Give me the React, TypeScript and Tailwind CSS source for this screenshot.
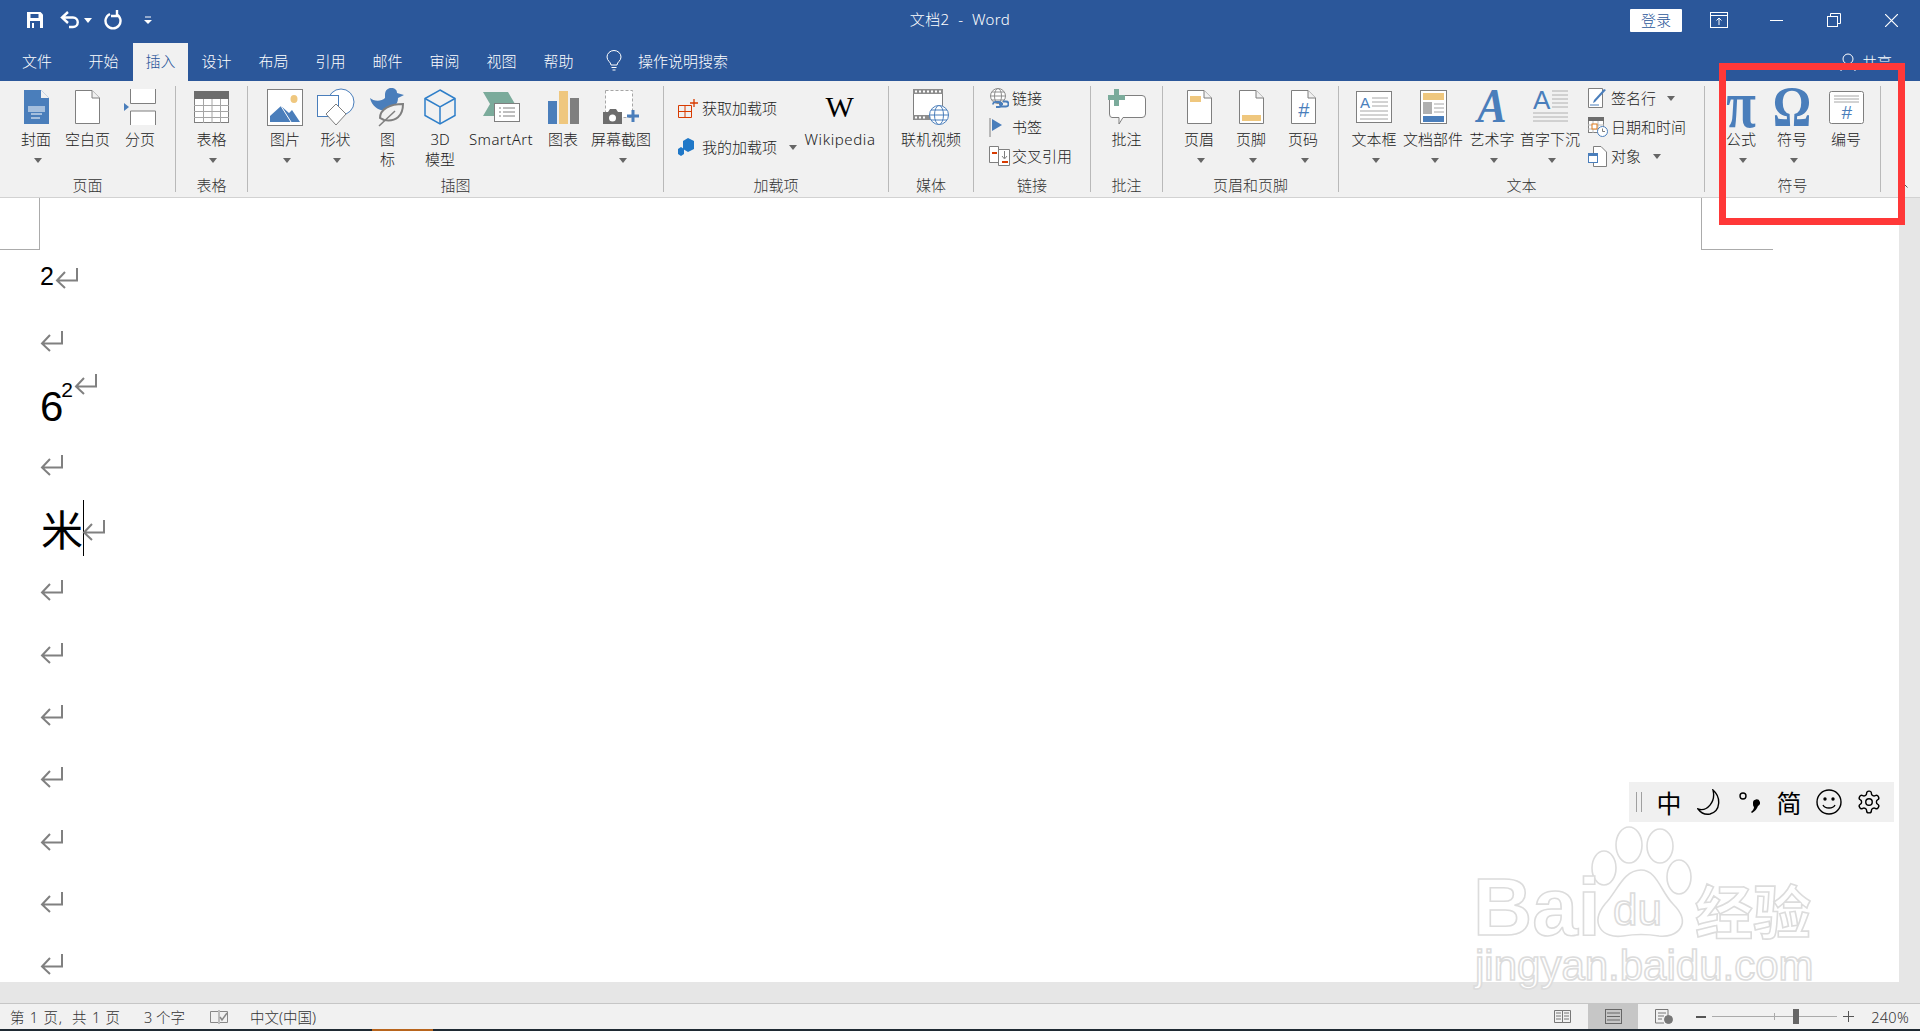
import { ReactNode } from "react";

const BLUE = "#4a7ebb";
const GOLD = "#efc77e";
const GRAY = "#7f7f7f";
const GREEN = "#7bab9b";
const RED = "#d83b01";

const Caret = ({ color = "#666" }: { color?: string }) => (
  <svg width="8" height="5" viewBox="0 0 8 5" className="shrink-0">
    <path d="M0 0H8L4 5Z" fill={color} />
  </svg>
);

const Return = ({ className = "" }: { className?: string }) => (
  <svg width="23" height="21" viewBox="0 0 23 21" className={`shrink-0 ${className}`}>
    <path d="M22 0V12.5H2M10 4L2 12.5L10 20" fill="none" stroke="#808080" strokeWidth="2" />
  </svg>
);

const Doc = ({ children }: { children?: ReactNode }) => (
  <svg width="25" height="34" viewBox="0 0 25 34">
    <path d="M.5.5H17L24.5 8V33.5H.5Z" fill="#fff" stroke={GRAY} />
    <path d="M17 .5V8H24.5" fill="#f1f1f1" stroke={GRAY} />
    {children}
  </svg>
);

const CoverIcon = () => (
  <svg width="25" height="34" viewBox="0 0 25 34">
    <path d="M0 0H17L25 8V34H0Z" fill={BLUE} />
    <path d="M17 0L25 8H17Z" fill="#f1f1f1" />
    <path d="M4 17H21M4 19H21M4 21H21M7 24H18M7 28H16" stroke="#fff" />
  </svg>
);

const BreakIcon = () => (
  <svg width="32" height="36" viewBox="0 0 32 36">
    <path d="M6.5 0V14.5H31.5V0M6.5 36V22H31.5V36" fill="#fff" stroke={GRAY} />
    <path d="M0 14L5 18L0 22Z" fill={BLUE} />
  </svg>
);

const TableIcon = () => (
  <svg width="35" height="32" viewBox="0 0 35 32">
    <rect x=".5" y=".5" width="34" height="31" fill="#fff" stroke={GRAY} />
    <rect width="35" height="8" fill="#6d6d6d" />
    <path d="M0 14.5H35M0 20.5H35M0 26.5H35M9.5 8V32M18 8V32M26.5 8V32" stroke="#a6a6a6" />
  </svg>
);

const PictureIcon = () => (
  <svg width="36" height="37" viewBox="0 0 36 37">
    <rect x=".5" y=".5" width="35" height="36" fill="#fff" stroke={GRAY} />
    <ellipse cx="27" cy="10" rx="3.5" ry="4" fill={GOLD} />
    <path d="M3 33V27L14 17L22 24L25 21L33 33Z" fill={BLUE} />
    <path d="M14 17L24 33" stroke="#fff" />
  </svg>
);

const ShapesIcon = () => (
  <svg width="38" height="38" viewBox="0 0 38 38">
    <circle cx="24" cy="14" r="13" fill="#fff" stroke={BLUE} />
    <rect x=".5" y="7.5" width="21" height="21" fill="#fff" stroke={BLUE} />
    <path d="M19 16L29 26L19 37L9 26Z" fill="#fff" stroke={GRAY} />
  </svg>
);

const IconsIcon = () => (
  <svg width="36" height="40" viewBox="0 0 36 40">
    <path d="M15 8C15 3 18 1 21 1C25 1 27 3 27 6L34 8L28 11C28 17 24 21 17 23C10 25 2 20 0 11C3 14 11 15 15 11Z" fill={BLUE} />
    <path d="M10 31C10 22 20 17 33 17C33 29 26 35 14 33Z" fill="#f1f1f1" stroke={GRAY} strokeWidth="2" />
    <path d="M9 39L25 24" stroke={GRAY} strokeWidth="1.5" />
  </svg>
);

const CubeIcon = () => (
  <svg width="32" height="36" viewBox="0 0 32 36" fill="none" stroke="#2f7fc9" strokeWidth="1.5">
    <path d="M16 1L31 9.5V26.5L16 35L1 26.5V9.5Z" />
    <path d="M1 9.5L16 18L31 9.5M16 18V35" />
  </svg>
);

const SmartArtIcon = () => (
  <svg width="37" height="30" viewBox="0 0 37 30">
    <path d="M0 0H25L32 12L25 24H0L7 12Z" fill={GREEN} />
    <rect x="11.5" y="11.5" width="25" height="18" fill="#fff" stroke={GRAY} />
    <path d="M16 16H18M16 20H18M16 24H18M20 16H32M20 20H32M20 24H32" stroke={GRAY} />
  </svg>
);

const ChartIcon = () => (
  <svg width="31" height="33" viewBox="0 0 31 33">
    <rect y="10" width="9" height="23" fill={BLUE} />
    <rect x="11" width="9" height="33" fill={GOLD} />
    <rect x="22" y="7" width="9" height="26" fill={GRAY} />
  </svg>
);

const ScreenshotIcon = () => (
  <svg width="36" height="34" viewBox="0 0 36 34">
    <rect x="2.5" y=".5" width="27" height="27" fill="#fff" stroke="#a6a6a6" strokeDasharray="3 2" />
    <path d="M0 22H5L7 19H13L15 22H19V34H0Z" fill="#6d6d6d" />
    <circle cx="9.5" cy="28" r="3.5" fill="#fff" />
    <path d="M30 20V32M24 26H36" stroke={BLUE} strokeWidth="3" />
  </svg>
);

const GetAddinsIcon = () => (
  <svg width="20" height="19" viewBox="0 0 20 19" fill="none" stroke={RED}>
    <path d="M.5 6.5H13.5V18.5H.5ZM7 6.5V18.5M.5 12.5H13.5" />
    <path d="M16 0V8M12 4H20" strokeWidth="1.3" />
  </svg>
);

const MyAddinsIcon = () => (
  <svg width="17" height="18" viewBox="0 0 17 18" fill="#1f78c8">
    <path d="M10 0L16 3V11L10 14L5 11V3Z" />
    <path d="M3 9L6 11V16L3 18L0 16V11Z" />
  </svg>
);

const VideoIcon = () => (
  <svg width="36" height="36" viewBox="0 0 36 36">
    <rect x=".5" y=".5" width="29" height="30" fill="#fff" stroke={GRAY} />
    <path d="M0 0H30V5H0ZM0 26H30V31H0Z" fill="#8c8c8c" />
    <path d="M3 1.5V3.5M7 1.5V3.5M11 1.5V3.5M15 1.5V3.5M19 1.5V3.5M23 1.5V3.5M27 1.5V3.5M3 27.5V29.5M7 27.5V29.5M11 27.5V29.5" stroke="#fff" strokeWidth="2" />
    <g fill="#fff" stroke={BLUE}>
      <circle cx="26" cy="26" r="9.5" />
      <ellipse cx="26" cy="26" rx="4.5" ry="9.5" />
      <path d="M16.5 26H35.5M18 21H34M18 31H34" />
    </g>
  </svg>
);

const LinkIcon = () => (
  <svg width="20" height="20" viewBox="0 0 20 20" fill="none">
    <g stroke="#8c8c8c">
      <circle cx="9" cy="8" r="7.5" fill="#fff" />
      <ellipse cx="9" cy="8" rx="3.5" ry="7.5" />
      <path d="M1.5 8H16.5M3 4H15M3 12H15" />
    </g>
    <path d="M10 16H14M4 16.5A2.5 2.5 0 0 1 7 14H10A2.5 2.5 0 0 1 10 19H7M14 13.5H17A2.5 2.5 0 0 1 17 18.5H13.5A2.5 2.5 0 0 1 11 16" stroke={BLUE} strokeWidth="1.8" />
  </svg>
);

const BookmarkIcon = () => (
  <svg width="14" height="19" viewBox="0 0 14 19">
    <path d="M1 0V19" stroke={GRAY} />
    <path d="M3 1L13 7L3 13Z" fill={BLUE} />
  </svg>
);

const CrossRefIcon = () => (
  <svg width="21" height="20" viewBox="0 0 21 20">
    <path d="M.5 .5H9.5V16.5H.5Z" fill="#fff" stroke={GRAY} />
    <path d="M9.5 3.5H20.5V19.5H9.5Z" fill="#fff" stroke={GRAY} />
    <path d="M3 7H8" stroke={RED} strokeWidth="2" />
    <path d="M13 16H19" stroke={RED} strokeWidth="2" />
    <path d="M15.5 5V12M13 10L15.5 13L18 10" stroke={GRAY} fill="none" />
  </svg>
);

const CommentIcon = () => (
  <svg width="38" height="37" viewBox="0 0 38 37">
    <path d="M4 6.5H34Q37.5 6.5 37.5 10V25Q37.5 28.5 34 28.5H15L11 35V28.5H4Q1.5 28.5 1.5 25V10Q1.5 6.5 4 6.5Z" fill="#fff" stroke={GRAY} />
    <path d="M6 0H11V6H17V11H11V17H6V11H0V6H6Z" fill={GREEN} />
  </svg>
);

const NumberIcon = () => (
  <svg width="35" height="33" viewBox="0 0 35 33">
    <rect x=".5" y=".5" width="34" height="32" rx="2" fill="#fff" stroke={GRAY} />
    <path d="M5 5H30M5 8H30M5 11H30" stroke="#a6a6a6" />
    <text x="17.5" y="28" textAnchor="middle" fontFamily="'Liberation Sans'" fontStyle="italic" fontSize="19" fill={BLUE}>#</text>
  </svg>
);

const TextBoxIcon = () => (
  <svg width="36" height="32" viewBox="0 0 36 32">
    <rect x=".5" y=".5" width="35" height="31" fill="#fff" stroke={GRAY} />
    <text x="4" y="17" fontFamily="'Liberation Sans'" fontSize="15" fill={BLUE}>A</text>
    <path d="M16 7H32M16 11H32M16 15H32M4 20H32M4 24H32M4 28H32" stroke="#a6a6a6" />
  </svg>
);

const PartsIcon = () => (
  <svg width="27" height="34" viewBox="0 0 27 34">
    <rect x=".5" y=".5" width="26" height="33" fill="#fff" stroke={GRAY} />
    <rect x="3" y="3" width="21" height="7" fill={GOLD} />
    <rect x="3" y="12" width="9" height="12" fill="#b0b0b0" />
    <path d="M14 14H24M14 18H24M14 22H24" stroke="#a6a6a6" />
    <rect x="3" y="26" width="21" height="6" fill={BLUE} />
  </svg>
);

const DropCapIcon = () => (
  <svg width="35" height="34" viewBox="0 0 35 34">
    <text x="0" y="19" fontFamily="'Liberation Sans'" fontSize="26" fill={BLUE}>A</text>
    <path d="M19 1H35M19 5H35M19 9H35M19 13H35M19 17H35M0 23H35M0 27H35M0 31H35" stroke="#b0b0b0" />
  </svg>
);

const SignIcon = () => (
  <svg width="19" height="20" viewBox="0 0 19 20">
    <path d="M.5 .5H14.5V19.5H.5Z" fill="#fff" stroke={GRAY} />
    <path d="M18 2L7 14L5 15L6 12L16 1Z" fill={BLUE} />
    <path d="M2 17H11" stroke={BLUE} />
  </svg>
);

const DateIcon = () => (
  <svg width="20" height="20" viewBox="0 0 20 20">
    <rect x=".5" y=".5" width="15" height="15" fill="#fff" stroke={GRAY} />
    <rect width="16" height="4" fill="#6d6d6d" />
    <path d="M5 4V16M10 4V16M0 8H16M0 12H16" stroke="#bbb" />
    <rect x="4" y="7" width="5" height="5" fill="#fff" stroke="#e07b1a" />
    <circle cx="14.5" cy="14.5" r="5" fill="#fff" stroke={BLUE} />
    <path d="M14.5 11.5V14.5H17" stroke={GRAY} fill="none" />
  </svg>
);

const ObjectIcon = () => (
  <svg width="19" height="21" viewBox="0 0 19 21">
    <path d="M5.5 .5H13L18.5 6V20.5H5.5Z" fill="#fff" stroke={GRAY} />
    <rect x=".5" y="7.5" width="9" height="9" fill="#fff" stroke={BLUE} />
    <rect y="7" width="10" height="3" fill={BLUE} />
  </svg>
);

const LargeButton = ({
  icon,
  lines,
  caret,
  width,
}: {
  icon: ReactNode;
  lines: string[];
  caret?: boolean;
  width: string;
}) => (
  <div className={`flex shrink-0 flex-col items-center ${width}`}>
    <div className="flex h-[43px] items-center justify-center pb-[1px]">{icon}</div>
    {lines.map((line) => (
      <div key={line} className="h-[20px] whitespace-nowrap leading-[20px]">
        {line}
      </div>
    ))}
    {caret && (
      <div className="ml-[3px] flex h-[22px] items-center">
        <Caret />
      </div>
    )}
  </div>
);

const SmallButton = ({
  icon,
  label,
  caretGap,
  slot = "w-[23px]",
}: {
  icon: ReactNode;
  label: string;
  caretGap?: string;
  slot?: string;
}) => (
  <div className="flex h-[20px] items-center whitespace-nowrap">
    <div className={`flex shrink-0 items-center ${slot}`}>{icon}</div>
    <span className="leading-[20px]">{label}</span>
    {caretGap && (
      <span className={caretGap}>
        <Caret />
      </span>
    )}
  </div>
);

const Group = ({
  title,
  width,
  children,
  last,
}: {
  title: string;
  width: string;
  children: ReactNode;
  last?: boolean;
}) => (
  <div className={`flex h-[106px] shrink-0 flex-col ${width} ${last ? "" : "border-r border-[#b9b9b9]"}`}>
    <div className="flex min-h-0 flex-1 items-start">{children}</div>
    <div className="h-[16px] text-center leading-[18px] text-[#333]">{title}</div>
  </div>
);

const tabs = [
  { name: "文件", width: "w-[74px]" },
  { name: "开始", width: "w-[59px]" },
  { name: "插入", width: "w-[55px]", active: true },
  { name: "设计", width: "w-[57px]" },
  { name: "布局", width: "w-[57px]" },
  { name: "引用", width: "w-[57px]" },
  { name: "邮件", width: "w-[57px]" },
  { name: "审阅", width: "w-[57px]" },
  { name: "视图", width: "w-[57px]" },
  { name: "帮助", width: "w-[57px]" },
];

const TitleBar = () => (
  <div className="grid h-[43px] grid-cols-[1fr_auto_1fr] bg-[#2b579a] pb-[3px] text-white">
    <div className="flex items-center pl-[27px]">
      <svg width="16" height="16" viewBox="0 0 16 16">
        <path d="M0 0H13.5L16 2.5V16H0Z" fill="#fff" />
        <rect x="3.5" y="2" width="8" height="4" fill="#2b579a" />
        <rect x="3" y="9" width="10" height="7" fill="#2b579a" />
        <rect x="5" y="11" width="2" height="5" fill="#fff" />
      </svg>
      <svg width="20" height="18" viewBox="0 0 20 18" fill="none" stroke="#fff" strokeWidth="2.4" className="ml-[17px]">
        <path d="M8 1L2 6.5L8 12M2 6.5H13A4.5 4.5 0 0 1 13 16H9" />
      </svg>
      <span className="ml-[4px]">
        <Caret color="#fff" />
      </span>
      <svg width="18" height="20" viewBox="0 0 18 20" fill="none" stroke="#fff" strokeWidth="2.4" className="ml-[12px]">
        <path d="M6 4A7.5 7.5 0 1 0 12 4M13 0V6H7" />
      </svg>
      <svg width="8" height="9" viewBox="0 0 8 9" className="ml-[22px]">
        <path d="M1 1H7" stroke="#fff" />
        <path d="M0 4H8L4 8Z" fill="#fff" />
      </svg>
    </div>
    <div className="flex items-center pb-[2px] text-[15px] font-light tracking-[0.4px]">文档2&nbsp;&nbsp;-&nbsp;&nbsp;Word</div>
    <div className="flex items-center justify-end">
      <div className="mr-[8px] flex h-[23px] w-[52px] items-center justify-center rounded-[1px] bg-white text-[15px] font-light text-[#2b579a]">
        登录
      </div>
      <div className="flex w-[57.5px] justify-center">
        <svg width="18" height="16" viewBox="0 0 18 16" fill="none" stroke="#fff">
          <rect x=".5" y=".5" width="17" height="15" />
          <path d="M0 3.5H18M9 13V6M6.5 8.5L9 6L11.5 8.5" />
        </svg>
      </div>
      <div className="flex w-[57.5px] justify-center">
        <div className="h-px w-[13px] bg-white" />
      </div>
      <div className="flex w-[57.5px] justify-center">
        <svg width="14" height="14" viewBox="0 0 14 14" fill="none" stroke="#fff">
          <rect x=".5" y="3.5" width="10" height="10" />
          <path d="M3.5 3.5V.5H13.5V10.5H10.5" />
        </svg>
      </div>
      <div className="flex w-[57.5px] justify-center">
        <svg width="13" height="13" viewBox="0 0 13 13" stroke="#fff" strokeWidth="1.2">
          <path d="M0 0L13 13M13 0L0 13" />
        </svg>
      </div>
    </div>
  </div>
);

const TabBar = () => (
  <div className="flex h-[38px] items-stretch bg-[#2b579a] text-[15px] font-light text-white">
    {tabs.map((tab) => (
      <div
        key={tab.name}
        className={`flex items-center justify-center pb-[2px] ${tab.width} ${tab.active ? "bg-[#f1f1f1] text-[#2b579a]" : ""}`}
      >
        {tab.name}
      </div>
    ))}
    <div className="ml-[19px] flex items-center gap-[16px] pb-[2px]">
      <svg width="16" height="22" viewBox="0 0 16 22" fill="none" stroke="#fff">
        <path d="M5 15C5 12 1 11 1 7A7 6.5 0 0 1 15 7C15 11 11 12 11 15Z" />
        <path d="M5.5 17.5H10.5M6.5 20H9.5" />
      </svg>
      <span>操作说明搜索</span>
    </div>
    <div className="ml-auto flex items-center gap-[6px] pr-[28px]">
      <svg width="16" height="18" viewBox="0 0 16 18" fill="none" stroke="#fff">
        <circle cx="8" cy="6" r="5" />
        <path d="M1 18C1 13 4 11 8 11S15 13 15 18" />
      </svg>
      <span>共享</span>
    </div>
  </div>
);

const Ribbon = () => (
  <div className="flex h-[117px] border-b border-[#d2d2d2] bg-[#f1f1f1] pt-[5px] text-[15px] font-light leading-[20px] text-[#222]">
    <Group title="页面" width="w-[176px]">
      <div className="w-[8px] shrink-0" />
      <LargeButton width="w-[56px]" icon={<CoverIcon />} lines={["封面"]} caret />
      <LargeButton width="w-[47px]" icon={<Doc />} lines={["空白页"]} />
      <LargeButton width="w-[58px]" icon={<BreakIcon />} lines={["分页"]} />
    </Group>
    <Group title="表格" width="w-[72px]">
      <LargeButton width="w-full" icon={<TableIcon />} lines={["表格"]} caret />
    </Group>
    <Group title="插图" width="w-[416px]">
      <div className="w-[12px] shrink-0" />
      <LargeButton width="w-[50px]" icon={<PictureIcon />} lines={["图片"]} caret />
      <LargeButton width="w-[51px]" icon={<ShapesIcon />} lines={["形状"]} caret />
      <LargeButton width="w-[53px]" icon={<IconsIcon />} lines={["图", "标"]} />
      <LargeButton width="w-[52px]" icon={<CubeIcon />} lines={["3D", "模型"]} />
      <div className="tracking-[0.4px]">
        <LargeButton width="w-[70px]" icon={<SmartArtIcon />} lines={["SmartArt"]} />
      </div>
      <LargeButton width="w-[54px]" icon={<ChartIcon />} lines={["图表"]} />
      <LargeButton width="w-[62px]" icon={<ScreenshotIcon />} lines={["屏幕截图"]} caret />
    </Group>
    <Group title="加载项" width="w-[225px]">
      <div className="flex w-[140px] shrink-0 flex-col gap-[19px] pl-[14px] pt-[12px]">
        <SmallButton slot="w-[24px]" icon={<GetAddinsIcon />} label="获取加载项" />
        <SmallButton slot="w-[24px]" icon={<MyAddinsIcon />} label="我的加载项" caretGap="ml-[12px]" />
      </div>
      <div className="tracking-[0.6px]">
        <LargeButton
          width="w-[72px]"
          icon={<span className="text-[30px] font-normal leading-none text-black [font-family:'Liberation_Serif',serif]">W</span>}
          lines={["Wikipedia"]}
        />
      </div>
    </Group>
    <Group title="媒体" width="w-[85px]">
      <LargeButton width="w-full" icon={<VideoIcon />} lines={["联机视频"]} />
    </Group>
    <Group title="链接" width="w-[117px]">
      <div className="flex flex-col gap-[9px] pl-[15px] pt-[2px]">
        <SmallButton icon={<LinkIcon />} label="链接" />
        <SmallButton icon={<BookmarkIcon />} label="书签" />
        <SmallButton icon={<CrossRefIcon />} label="交叉引用" />
      </div>
    </Group>
    <Group title="批注" width="w-[72px]">
      <LargeButton width="w-full" icon={<CommentIcon />} lines={["批注"]} />
    </Group>
    <Group title="页眉和页脚" width="w-[176px]">
      <div className="w-[10px] shrink-0" />
      <LargeButton
        width="w-[52px]"
        icon={<Doc><rect x="3" y="6" width="11" height="6" fill={GOLD} /></Doc>}
        lines={["页眉"]}
        caret
      />
      <LargeButton
        width="w-[52px]"
        icon={<Doc><rect x="3" y="25" width="19" height="6" fill={GOLD} /></Doc>}
        lines={["页脚"]}
        caret
      />
      <LargeButton
        width="w-[52px]"
        icon={
          <Doc>
            <text x="12.5" y="27" textAnchor="middle" fontFamily="'Liberation Sans'" fontStyle="italic" fontSize="20" fill={BLUE}>#</text>
          </Doc>
        }
        lines={["页码"]}
        caret
      />
    </Group>
    <Group title="文本" width="w-[366px]">
      <div className="w-[11px] shrink-0" />
      <LargeButton width="w-[48px]" icon={<TextBoxIcon />} lines={["文本框"]} caret />
      <LargeButton width="w-[70px]" icon={<PartsIcon />} lines={["文档部件"]} caret />
      <LargeButton
        width="w-[48px]"
        icon={<span className="origin-center scale-y-110 text-[44px] font-bold italic leading-none text-[#4a7ebb] [font-family:'Liberation_Serif',serif]">A</span>}
        lines={["艺术字"]}
        caret
      />
      <LargeButton width="w-[68px]" icon={<DropCapIcon />} lines={["首字下沉"]} caret />
      <div className="flex flex-col gap-[9px] pl-[4px] pt-[2px]">
        <SmallButton icon={<SignIcon />} label="签名行" caretGap="ml-[11px]" />
        <SmallButton icon={<DateIcon />} label="日期和时间" />
        <SmallButton icon={<ObjectIcon />} label="对象" caretGap="ml-[12px]" />
      </div>
    </Group>
    <Group title="符号" width="w-[176px]">
      <div className="w-[11px] shrink-0" />
      <LargeButton
        width="w-[50px]"
        icon={<span className="inline-block origin-center -translate-y-[3px] scale-y-125 text-[54px] font-bold leading-none text-[#4a7ebb] [font-family:'Liberation_Serif',serif]">π</span>}
        lines={["公式"]}
        caret
      />
      <LargeButton
        width="w-[52px]"
        icon={<span className="inline-block origin-center scale-y-[1.2] text-[48px] font-bold leading-none text-[#4a7ebb] [font-family:'Liberation_Serif',serif]">Ω</span>}
        lines={["符号"]}
        caret
      />
      <LargeButton width="w-[56px]" icon={<NumberIcon />} lines={["编号"]} />
    </Group>
    <div className="relative flex-1">
      <svg width="9" height="5" viewBox="0 0 9 5" fill="none" stroke="#555" className="absolute bottom-[9px] left-[18px]">
        <path d="M.5 4.5L4.5 .5L8.5 4.5" />
      </svg>
    </div>
  </div>
);

const Row = ({ children }: { children?: ReactNode }) => (
  <div className="flex h-[62.4px] items-center pl-[40px]">{children ?? <Return />}</div>
);

const ImeBar = () => (
  <div className="absolute left-[1629px] top-[584px] flex h-[40px] w-[265px] items-center bg-[#f0f0f0] pl-[7px] text-[25px] leading-none text-black [font-family:'Noto_Sans_CJK_SC',sans-serif]">
    <div className="mr-[7px] h-[20px] w-[6px] border-x border-[#a0a0a0]" />
    <div className="flex w-[40px] justify-center">中</div>
    <div className="flex w-[40px] justify-center">
      <svg width="25" height="26" viewBox="0 0 25 26" fill="none" stroke="#000" strokeWidth="1.4">
        <path d="M16 1C24 8 24 22 13 25C8 26 4 24 1 20C10 23 19 13 16 1Z" />
      </svg>
    </div>
    <div className="flex w-[40px] justify-center">
      <svg width="22" height="24" viewBox="0 0 22 24">
        <circle cx="5" cy="6" r="3" fill="none" stroke="#000" strokeWidth="1.4" />
        <path d="M15 13A3.5 3.5 0 1 1 20 16C19 19 17 21 14 23L13 22C15 20 16 19 16 17C15 16 15 15 15 13Z" />
      </svg>
    </div>
    <div className="flex w-[40px] justify-center">简</div>
    <div className="flex w-[40px] justify-center">
      <svg width="26" height="26" viewBox="0 0 26 26" fill="none" stroke="#000" strokeWidth="1.4">
        <circle cx="13" cy="13" r="12" />
        <circle cx="9" cy="10" r="1" fill="#000" />
        <circle cx="17" cy="10" r="1" fill="#000" />
        <path d="M7 16C9 20 17 20 19 16" />
      </svg>
    </div>
    <div className="flex w-[40px] justify-center">
      <svg width="26" height="26" viewBox="0 0 24 24" fill="none" stroke="#000" strokeWidth="1.3">
        <path d="M12.22 2h-.44a2 2 0 0 0-2 2v.18a2 2 0 0 1-1 1.73l-.43.25a2 2 0 0 1-2 0l-.15-.08a2 2 0 0 0-2.73.73l-.22.38a2 2 0 0 0 .73 2.73l.15.1a2 2 0 0 1 1 1.72v.51a2 2 0 0 1-1 1.74l-.15.09a2 2 0 0 0-.73 2.73l.22.38a2 2 0 0 0 2.73.73l.15-.08a2 2 0 0 1 2 0l.43.25a2 2 0 0 1 1 1.73V20a2 2 0 0 0 2 2h.44a2 2 0 0 0 2-2v-.18a2 2 0 0 1 1-1.73l.43-.25a2 2 0 0 1 2 0l.15.08a2 2 0 0 0 2.73-.73l.22-.39a2 2 0 0 0-.73-2.73l-.15-.08a2 2 0 0 1-1-1.74v-.5a2 2 0 0 1 1-1.74l.15-.09a2 2 0 0 0 .73-2.73l-.22-.38a2 2 0 0 0-2.73-.73l-.15.08a2 2 0 0 1-2 0l-.43-.25a2 2 0 0 1-1-1.73V4a2 2 0 0 0-2-2z" />
        <circle cx="12" cy="12" r="3" />
      </svg>
    </div>
  </div>
);

const Page = () => (
  <div className="relative min-w-0 flex-1 overflow-hidden bg-white pt-[49.5px] text-black [font-family:'Liberation_Sans','Noto_Sans_CJK_SC',sans-serif]">
    <div className="absolute left-0 top-0 h-[52px] w-[40px] border-b border-r border-[#ababab]" />
    <div className="absolute left-[1701px] top-0 h-[52px] w-[72px] border-b border-l border-[#ababab]" />
    <Row>
      <span className="mb-[4px] text-[25px] leading-none">2</span>
      <Return className="ml-[1px]" />
    </Row>
    <Row />
    <Row>
      <div className="flex h-[50px] items-start">
        <span className="mt-[8px] text-[42px] font-light leading-none">6</span>
        <span className="ml-[-2px] mt-[1px] text-[21px] font-light leading-none">2</span>
        <Return className="ml-[1px] mt-[-4px]" />
      </div>
    </Row>
    <Row />
    <Row>
      <span className="ml-[1px] text-[42px] leading-none [font-family:'Noto_Sans_CJK_SC',sans-serif]">米</span>
      <div className="h-[56px] w-px shrink-0 bg-black" />
      <Return className="ml-[-2px] mt-[4px]" />
    </Row>
    <Row />
    <Row />
    <Row />
    <Row />
    <Row />
    <Row />
    <Row />
    <ImeBar />
  </div>
);

const StatusBar = () => (
  <div className="flex h-[26px] items-stretch border-t border-[#c6c6c6] bg-[#f1f1f1] text-[14.5px] font-light text-[#333]">
    <div className="flex items-center pl-[10px] pt-[2px]">
      <span className="w-[134px] whitespace-nowrap tracking-[0.8px]">第 1 页,&nbsp;&nbsp;共 1 页</span>
      <span className="w-[66px]">3 个字</span>
      <svg width="18" height="14" viewBox="0 0 18 14" fill="none" stroke="#888" className="mb-[2px]">
        <path d="M8 1.5H.5V12.5H8M10 1.5H17.5V12.5H10M9 0V14" />
        <path d="M10 7L12 10L17 3" strokeWidth="1.5" />
      </svg>
      <span className="ml-[22px]">中文(中国)</span>
    </div>
    <div className="ml-auto flex items-center pr-[11px]">
      <svg width="17" height="16" viewBox="0 0 17 16" fill="none" stroke="#777">
        <path d="M.5 1.5H8.5V13.5H.5ZM8.5 1.5H16.5V13.5H8.5ZM2 4H7M2 7H7M2 10H7M10 4H15M10 7H15M10 10H15" />
      </svg>
      <div className="ml-[17px] flex w-[50px] items-center justify-center self-stretch bg-[#c6c6c6]">
        <svg width="17" height="15" viewBox="0 0 17 15" fill="none" stroke="#666">
          <rect x=".5" y=".5" width="16" height="14" />
          <path d="M2 4H15M2 7.5H15M2 11H15" />
        </svg>
      </div>
      <svg width="18" height="15" viewBox="0 0 18 15" fill="none" stroke="#777" className="ml-[17px]">
        <path d="M9 14H.5V.5H13V7M3 4H11M3 7H9M3 10H7" />
        <circle cx="13.5" cy="10.5" r="4" fill="#777" />
      </svg>
      <div className="ml-[23px] h-[2px] w-[10px] bg-[#555]" />
      <div className="relative ml-[6px] h-px w-[125px] bg-[#aaa]">
        <div className="absolute left-[62px] top-[-3px] h-[7px] w-px bg-[#aaa]" />
        <div className="absolute left-[81px] top-[-7px] h-[15px] w-[6px] bg-[#666]" />
      </div>
      <svg width="11" height="11" viewBox="0 0 11 11" stroke="#555" className="ml-[6px]">
        <path d="M0 5.5H11M5.5 0V11" />
      </svg>
      <span className="ml-[17px] pt-[2px] tracking-[0.3px]">240%</span>
    </div>
  </div>
);

// watermark sits over the page's bottom right corner
const Watermark = () => (
  <svg
    width="360"
    height="175"
    viewBox="0 0 360 175"
    className="pointer-events-none absolute left-[1465px] top-[820px]"
    fill="#fff"
    stroke="#dcdcdc"
    strokeWidth="1.6"
  >
    <ellipse cx="139" cy="48" rx="12" ry="17" />
    <ellipse cx="164" cy="25" rx="13" ry="18" />
    <ellipse cx="195" cy="26" rx="13" ry="17" />
    <ellipse cx="214" cy="57" rx="12" ry="17" />
    <path d="M176 50C192 50 196 72 208 84C228 104 212 118 194 116C182 114 170 114 158 116C138 119 124 104 140 84C152 72 158 50 176 50Z" />
    <g fontFamily="'Liberation Sans',sans-serif">
      <text x="8" y="115" fontSize="82" fontWeight="700">Bai</text>
      <text x="148" y="105" fontSize="44">du</text>
      <text x="10" y="160" fontSize="42">jingyan.baidu.com</text>
    </g>
    <text x="230" y="114" fontSize="58" fontWeight="700" fontFamily="'Noto Sans CJK SC',sans-serif">经验</text>
  </svg>
);

export default function App() {
  return (
    <div className="relative flex h-[1031px] w-[1920px] flex-col overflow-hidden [font-family:'Noto_Sans','Noto_Sans_CJK_SC',sans-serif]">
      <TitleBar />
      <TabBar />
      <Ribbon />
      <div className="flex min-h-0 flex-1 bg-[#e6e6e6] pb-[21px] pr-[21px]">
        <Page />
      </div>
      <StatusBar />
      <div className="flex h-[2px] bg-[#1f2a33]">
        <div className="ml-[372px] w-[61px] bg-[#b8651d]" />
      </div>
      <Watermark />
      <div className="pointer-events-none absolute left-[1719px] top-[63px] h-[162px] w-[186px] border-[7px] border-[#ff3838]" />
    </div>
  );
}
